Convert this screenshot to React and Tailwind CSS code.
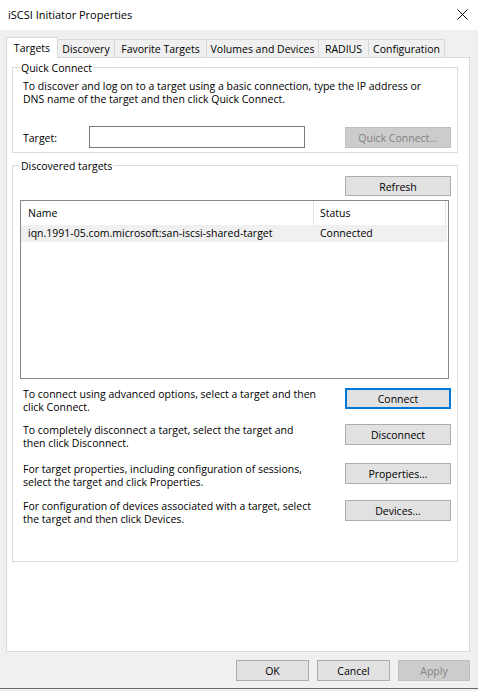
const font = { fontFamily: '"Open Sans", "Noto Sans", sans-serif' };

const tabs = [
    { label: 'Targets', w: 'w-[52px]', active: true },
    { label: 'Discovery', w: 'w-[57px]' },
    { label: 'Favorite Targets', w: 'w-[92px]' },
    { label: 'Volumes and Devices', w: 'w-[112px]' },
    { label: 'RADIUS', w: 'w-[50px]' },
    { label: 'Configuration', w: 'w-[76px]' },
];

const actions = [
    { text: ['To connect using advanced options, select a target and then', 'click Connect.'], btn: 'Connect', h: 'h-[36px]', primary: true },
    { text: ['To completely disconnect a target, select the target and', 'then click Disconnect.'], btn: 'Disconnect', h: 'h-[39px]' },
    { text: ['For target properties, including configuration of sessions,', 'select the target and click Properties.'], btn: 'Properties...', h: 'h-[37px]' },
    { text: ['For configuration of devices associated with a target, select', 'the target and then click Devices.'], btn: 'Devices...', h: 'h-[37px]' },
];

function Button({ children, disabled, primary, className = '' }) {
    // botones estilo Windows 10
    let look = 'border border-[#adadad] bg-[#e1e1e1] text-black';
    if (disabled) look = 'border border-[#bfbfbf] bg-[#cccccc] text-[#838383]';
    if (primary) look = 'border-2 border-[#0078d7] bg-[#e1e1e1] text-black';
    return (
        <div className={`flex items-center justify-center shrink-0 h-[21px] pt-[2px] leading-none ${look} ${className}`}>
            {children}
        </div>
    );
}

function GroupLabel({ children }) {
    return (
        <div className="-mt-[8px] ml-[7px] w-fit h-[14px] px-[1px] bg-white leading-[16px]">{children}</div>
    );
}

export default function App() {
    return (
        <div className="w-[478px] h-[691px] bg-[#f0f0f0] flex flex-col text-[10.5px] text-black" style={font}>
            {/* Barra de título */}
            <div className="h-[30px] bg-white flex items-center justify-between pl-[8px] pr-[10px] shrink-0">
                <span className="text-[11px] pt-[1px]">iSCSI Initiator Properties</span>
                <svg width="11" height="11" viewBox="0 0 11 11" className="mt-[-1px]">
                    <path d="M0.5 0.5 L10.5 10.5 M10.5 0.5 L0.5 10.5" stroke="#000" strokeWidth="1" />
                </svg>
            </div>

            {/* Pestañas */}
            <div className="pt-[7px] pl-[6px] flex items-end h-[27px] shrink-0">
                {tabs.map(t => t.active ? (
                    <div key={t.label} className={`${t.w} h-[21px] -mb-px relative z-10 bg-white border border-b-0 border-[#d9d9d9] flex items-center justify-center pt-[1px]`}>
                        {t.label}
                    </div>
                ) : (
                    <div key={t.label} className={`${t.w} h-[18px] bg-[#f0f0f0] border-t border-r border-[#d9d9d9] flex items-center justify-center pt-[3px]`}>
                        {t.label}
                    </div>
                ))}
            </div>

            {/* Panel */}
            <div className="ml-[6px] w-[464px] h-[595px] shrink-0 bg-white border border-[#d9d9d9] pl-[5px] pt-[9px]">
                {/* Quick Connect */}
                <div className="w-[446px] h-[86px] border border-[#dcdcdc]">
                    <GroupLabel>Quick Connect</GroupLabel>
                    <div className="mt-[6px] pl-[10px] leading-[13px]">
                        <div>To discover and log on to a target using a basic connection, type the IP address or</div>
                        <div>DNS name of the target and then click Quick Connect.</div>
                    </div>
                    <div className="mt-[20px] pl-[10px] flex items-center h-[22px]">
                        <span className="w-[66px] pt-[3px]">Target:</span>
                        <div className="w-[216px] h-[22px] border border-[#7a7a7a] bg-white"></div>
                        <Button disabled className="ml-[40px] w-[106px]">Quick Connect...</Button>
                    </div>
                </div>

                {/* Discovered targets */}
                <div className="mt-[12px] w-[446px] h-[397px] border border-[#dcdcdc]">
                    <GroupLabel>Discovered targets</GroupLabel>
                    <Button className="mt-[4px] ml-[332px] w-[106px] !h-[20px]">Refresh</Button>
                    <div className="mt-[4px] ml-[7px] w-[429px] h-[179px] border border-[#828790] bg-white">
                        <div className="flex h-[24px] items-center">
                            <div className="w-[293px] h-full border-r border-[#e5e5e5] pl-[7px] pt-[1px] flex items-center">Name</div>
                            <div className="w-[132px] h-full border-r border-[#e5e5e5] pl-[6px] pt-[1px] flex items-center">Status</div>
                        </div>
                        <div className="flex h-[17px] w-[426px] items-center bg-[#f0f0f0] pt-[1px]">
                            <div className="w-[293px] pl-[7px]">iqn.1991-05.com.microsoft:san-iscsi-shared-target</div>
                            <div className="pl-[6px]">Connected</div>
                        </div>
                    </div>

                    <div className="mt-[9px]">
                        {actions.map(a => (
                            <div key={a.btn} className={`${a.h} flex items-start pl-[10px]`}>
                                <div className="w-[322px] leading-[13px]">
                                    {a.text.map(l => <div key={l}>{l}</div>)}
                                </div>
                                <Button primary={a.primary} className="w-[106px]">{a.btn}</Button>
                            </div>
                        ))}
                    </div>
                </div>
            </div>

            {/* Botones inferiores */}
            <div className="mt-[8px] pl-[236px] flex gap-[8px] shrink-0">
                <Button className="w-[73px]">OK</Button>
                <Button className="w-[73px]">Cancel</Button>
                <Button disabled className="w-[72px]">Apply</Button>
            </div>

            <div className="flex-1"></div>
            <div className="h-[1px] bg-[#6b6b6b] shrink-0"></div>
            <div className="h-[2px] bg-[#f0f0f0] shrink-0"></div>
        </div>
    );
}
